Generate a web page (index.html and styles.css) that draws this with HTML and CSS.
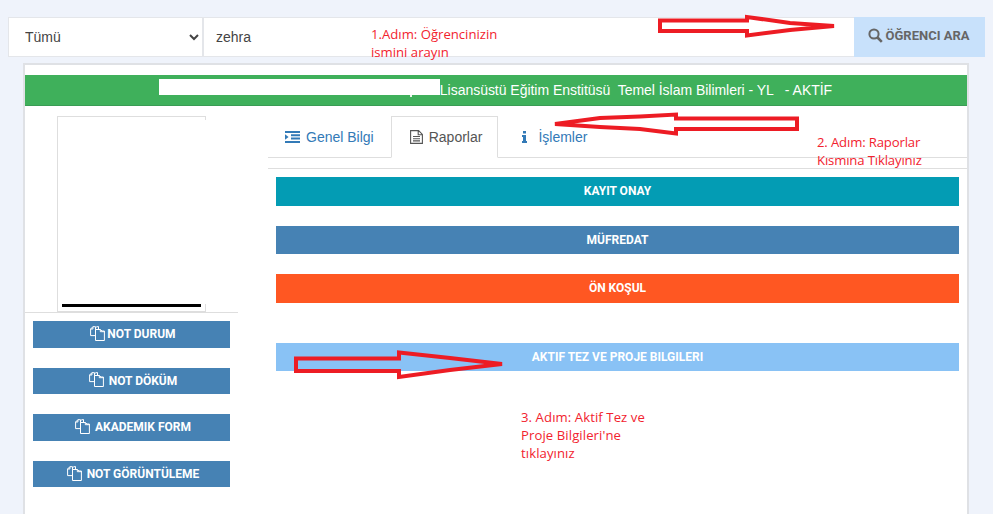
FILE: index.html
```html
<!DOCTYPE html>
<html lang="tr">
<head>
<meta charset="utf-8">
<title>Öğrenci Ara</title>
<link rel="stylesheet" href="styles.css">
</head>
<body>
<svg width="0" height="0" class="defs">
  <symbol id="files" viewBox="0 0 15 15">
    <path d="M5.5 3.5V.7H2.9L.6 3v6.6h4.9M2.9.7V3H.6" fill="none" stroke="currentColor" stroke-width="1"/>
    <path d="M5.5 3.5h3V.7H6.6L5.5 2zM8.5.7v2.8M14.4 5H12l-1.7-1.5H5.5v11h8.9z" fill="none" stroke="currentColor" stroke-width="1"/>
    <path d="M10.3 3.5V5.7H14.4" fill="none" stroke="currentColor" stroke-width="1"/>
  </symbol>
</svg>

<form class="search">
  <select class="search-scope"><option>Tümü</option></select>
  <input class="search-input" type="text" value="zehra">
  <button class="search-btn" type="button">
    <svg class="search-icon" width="15" height="15" viewBox="0 0 15 15"><circle cx="6" cy="6" r="4.6" fill="none" stroke="currentColor" stroke-width="2"/><path d="M9.5 9.5l4.3 4.3" stroke="currentColor" stroke-width="2.6" fill="none"/></svg>
    <span>ÖĞRENCI ARA</span>
  </button>
</form>

<main class="card">
  <header class="banner"><span class="redact"></span><span class="banner-text">Lisansüstü Eğitim Enstitüsü  Temel İslam Bilimleri - YL   - AKTİF</span></header>
  <div class="content">
    <aside class="side">
      <div class="photo"><div class="photo-bar"></div></div>
      <div class="side-rule"></div>
      <div class="side-actions">
        <a class="side-btn"><svg class="file-icon"><use href="#files"/></svg>NOT DURUM</a>
        <a class="side-btn"><svg class="file-icon"><use href="#files"/></svg>&nbsp;NOT DÖKÜM</a>
        <a class="side-btn"><svg class="file-icon"><use href="#files"/></svg>&nbsp;AKADEMIK FORM</a>
        <a class="side-btn"><svg class="file-icon"><use href="#files"/></svg>&nbsp;NOT GÖRÜNTÜLEME</a>
      </div>
    </aside>
    <section class="panel">
      <nav class="tabs">
        <a class="tab">
          <svg class="tab-icon" width="15" height="12" viewBox="0 0 15 12"><path d="M0 0h15v2H0zM6 3.3h9v2H6zM6 6.6h9v2H6zM0 10h15v2H0zM0 3.3l3.6 2.7L0 8.7z" fill="currentColor"/></svg>
          <span>Genel Bilgi</span>
        </a>
        <a class="tab tab-active">
          <svg class="tab-icon" width="13" height="14" viewBox="0 0 13 14"><path d="M.6.6h8l3.8 3.8v9H.6zM8.2.6v4.2h4.2M3 6.5h7M3 8.7h7M3 10.9h7" fill="none" stroke="currentColor" stroke-width="1.1"/></svg>
          <span>Raporlar</span>
        </a>
        <a class="tab">
          <svg class="tab-icon tab-icon-info" width="5" height="12" viewBox="0 0 5 12"><path d="M1 0h3v2.4H1zM0 4h4v6h1v2H0v-2h1V6H0z" fill="currentColor"/></svg>
          <span>İşlemler</span>
        </a>
      </nav>
      <hr class="panel-rule">
      <div class="reports">
        <a class="report report-teal">KAYIT ONAY</a>
        <a class="report report-blue">MÜFREDAT</a>
        <a class="report report-orange">ÖN KOŞUL</a>
        <a class="report report-light">AKTIF TEZ VE PROJE BILGILERI</a>
      </div>
    </section>
  </div>
</main>

<svg class="arrows" width="993" height="514" viewBox="0 0 993 514">
  <path d="M660 20.5H747V17L790 23L834 26L790 30L747 35.5V31H660Z"/>
  <path d="M555 124L600 118L640 116.5L676 114.5V118.5H797V129H676V133.5L640 129L600 127Z"/>
  <path d="M296 358.5H399V352.5L450 358L502 364L450 370L399 377V371H296Z"/>
</svg>
<p class="note note-1">1.Adım: Öğrencinizin<br>ismini arayın</p>
<p class="note note-2">2. Adım: Raporlar<br>Kısmına Tıklayınız</p>
<p class="note note-3">3. Adım: Aktif Tez ve<br>Proje Bilgileri'ne<br>tıklayınız</p>
</body>
</html>
```
FILE: styles.css
```css
* { box-sizing: border-box; }
html, body { margin: 0; height: 514px; overflow: hidden; }
body {
  position: relative;
  background: #eff3fb;
  font-family: "Liberation Sans", Arial, sans-serif;
  font-size: 14px;
  color: #444;
  padding-top: 17px;
}
.defs { position: absolute; }

.search { display: flex; height: 40px; margin: 0 8px; }
.search-scope {
  width: 196px;
  border: 1px solid #e4e6ea;
  border-right-width: 2px;
  background: #fff;
  padding-left: 12px;
  font: 14px "Liberation Sans", Arial, sans-serif;
  color: #444;
  outline: 0;
  border-radius: 0;
}
.search-input {
  flex: 1;
  border: 1px solid #e4e6ea;
  border-left: 0;
  border-right: 0;
  background: #fff;
  padding: 0 12px;
  font: 14px "Liberation Sans", Arial, sans-serif;
  color: #444;
  outline: 0;
}
.search-btn {
  width: 131px;
  border: 0;
  background: #c8e1fb;
  color: #666;
  display: flex;
  align-items: center;
  justify-content: center;
  gap: 3px;
  font: 700 13px Roboto, sans-serif;
  padding: 0 2px 4px 0;
}

.card {
  margin: 6px 24px 0 23px;
  height: 520px;
  border: 2px solid #dfe1e5;
  border-bottom: 0;
  background: #fff;
  padding-top: 10px;
}
.banner {
  height: 31px;
  background: #3fb05b;
  border-bottom: 1px solid #3a9c54;
  color: #fff;
  display: flex;
  align-items: center;
  justify-content: center;
  white-space: pre;
  letter-spacing: -0.03px;
  padding-right: 1px;
}
.redact { position: relative; width: 281px; height: 16px; background: #fff; margin-top: -6px; }
.redact::after {
  content: "";
  position: absolute;
  left: 251px;
  top: 16px;
  width: 2px;
  height: 2px;
  background: #eaf6ec;
}

.content { display: grid; grid-template-columns: 243px 1fr; }
.side { padding-top: 10px; }
.photo {
  width: 149px;
  height: 196px;
  margin-left: 32px;
  border: 1px solid #dedede;
  border-right: 0;
  padding: 0 5px 4px 4px;
  display: flex;
  flex-direction: column;
  justify-content: flex-end;
  background:
    linear-gradient(#dedede, #dedede) right top / 1px 3px no-repeat,
    linear-gradient(#dedede, #dedede) right bottom / 1px 7px no-repeat;
}
.photo-bar { height: 3px; background: #000; }
.side-rule { width: 213px; height: 1px; background: #dedede; }
.side-actions { padding: 8px 0 0 8px; display: flex; flex-direction: column; gap: 20px; }
.side-btn {
  width: 197px;
  height: 26.6px;
  padding-left: 3px;
  background: #4682b4;
  color: #fff;
  display: flex;
  align-items: center;
  justify-content: center;
  font: 700 12px Roboto, sans-serif;
  white-space: pre;
}
.file-icon { width: 15px; height: 15px; margin-right: 2px; margin-top: -2px; color: #fff; }

.panel { padding-top: 10px; }
.tabs {
  display: flex;
  height: 42px;
  border-bottom: 1px solid #dedede;
}
.tab {
  display: flex;
  align-items: center;
  padding: 0 16px;
  color: #337ab7;
  height: 42px;
  border: 1px solid transparent;
}
.tab-icon { margin-right: 6px; }
.tab-active {
  color: #555;
  padding: 0 15px 0 18px;
  border-color: #dedede;
  border-bottom-color: #fff;
  background: #fff;
}
.tab-icon-info { margin: 0 11px 0 7px; }
.panel-rule { border: 0; height: 1px; background: #dedede; margin: 10px 0 8px; }
.reports { padding: 0 8px; display: flex; flex-direction: column; gap: 20px; }
.report {
  height: 28.6px;
  display: flex;
  align-items: center;
  justify-content: center;
  color: #fff;
  font: 700 12px Roboto, sans-serif;
}
.report-teal { background: #039cb4; }
.report-blue { background: #4682b4; }
.report-orange { background: #ff5722; }
.report-light { background: #89c2f5; margin-top: 20px; }

.arrows { position: absolute; left: 0; top: 0; pointer-events: none; }
.arrows path { fill: none; stroke: #ed1c24; stroke-width: 4; }
.note {
  position: absolute;
  margin: 0;
  font: 13.15px/18px "Open Sans", sans-serif;
  color: #f2222e;
  white-space: nowrap;
}
.note-1 { left: 371px; top: 25px; }
.note-2 { left: 817px; top: 133px; letter-spacing: -0.15px; }
.note-3 { left: 521px; top: 408px; letter-spacing: 0.08px; }
```
